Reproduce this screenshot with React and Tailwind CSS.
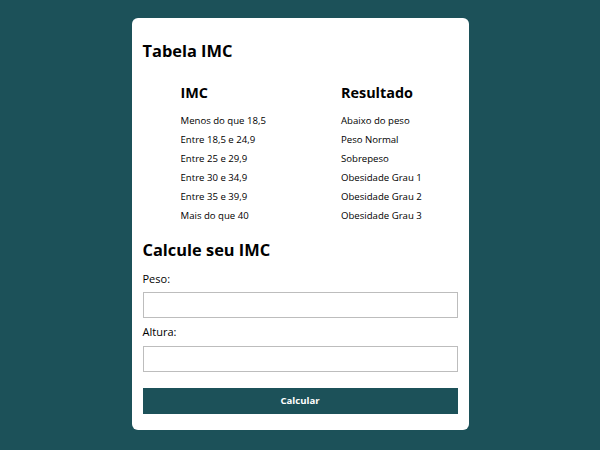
export default function App() {
  const rows = [
    ["Menos do que 18,5", "Abaixo do peso"],
    ["Entre 18,5 e 24,9", "Peso Normal"],
    ["Entre 25 e 29,9", "Sobrepeso"],
    ["Entre 30 e 34,9", "Obesidade Grau 1"],
    ["Entre 35 e 39,9", "Obesidade Grau 2"],
    ["Mais do que 40", "Obesidade Grau 3"],
  ];

  return (
    <div
      className="flex min-h-[450px] w-full justify-center bg-[#1c5159] pt-[18px]"
      style={{ fontFamily: '"Open Sans", sans-serif' }}
    >
      <div className="h-[412px] w-[337px] rounded-[6px] bg-white px-[11px] pt-[21px] text-black">
        <h2 className="text-[16.4px] font-bold leading-[24px]">Tabela IMC</h2>

        <div className="mt-[19px] grid grid-cols-2">
          <div className="pl-[38px] text-[14.4px] font-bold leading-[22px]">IMC</div>
          <div className="pl-[41px] text-[14.4px] font-bold leading-[22px]">Resultado</div>
        </div>
        <div className="mt-[7px]">
          {rows.map(([imc, res]) => (
            <div key={imc} className="grid grid-cols-2 text-[9.6px] leading-[19px]">
              <span className="pl-[38px]">{imc}</span>
              <span className="pl-[41px]">{res}</span>
            </div>
          ))}
        </div>

        <h2 className="mt-[13px] text-[16.4px] font-bold leading-[24px]">Calcule seu IMC</h2>

        <label className="mt-[8px] block text-[11px] leading-[18px]">Peso:</label>
        <input
          type="text"
          className="mt-[4px] block h-[26px] w-full border border-[#bdbdbd] outline-none"
        />
        <label className="mt-[5px] block text-[11px] leading-[18px]">Altura:</label>
        <input
          type="text"
          className="mt-[5px] block h-[26px] w-full border border-[#bdbdbd] outline-none"
        />
        <button
          type="button"
          className="mt-[16px] block h-[26px] w-full bg-[#1c5159] text-[9.6px] font-bold text-white"
        >
          Calcular
        </button>
      </div>
    </div>
  );
}
